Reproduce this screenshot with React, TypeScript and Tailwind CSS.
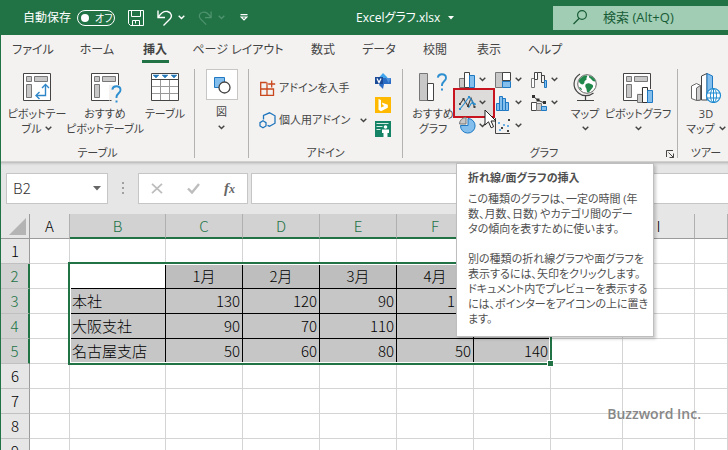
import type { ReactNode } from "react";

const tabs = [
  { label: "ファイル", width: "w-16" },
  { label: "ホーム", width: "w-16" },
  { label: "挿入", width: "w-[52px]", active: true },
  { label: "ページ レイアウト", width: "w-[114px]" },
  { label: "数式", width: "w-14" },
  { label: "データ", width: "w-14" },
  { label: "校閲", width: "w-14" },
  { label: "表示", width: "w-[52px]" },
  { label: "ヘルプ", width: "w-[60px]" },
];

const columns = ["A", "B", "C", "D", "E", "F", "G", "H", "I", ""];

const rows = [
  ["", "", "", "", "", "", "", "", "", ""],
  ["", "", "1月", "2月", "3月", "4月", "", "", "", ""],
  ["", "本社", "130", "120", "90", "110", "", "", "", ""],
  ["", "大阪支社", "90", "70", "110", "", "", "", "", ""],
  ["", "名古屋支店", "50", "60", "80", "50", "140", "", "", ""],
  ["", "", "", "", "", "", "", "", "", ""],
  ["", "", "", "", "", "", "", "", "", ""],
  ["", "", "", "", "", "", "", "", "", ""],
  ["", "", "", "", "", "", "", "", "", ""],
];

const inCols = (c: number) => c >= 1 && c <= 6;
const inRows = (r: number) => r >= 1 && r <= 4;

function Chevron({ className = "" }: { className?: string }) {
  return (
    <svg width="7" height="5" viewBox="0 0 7 5" fill="none" stroke="currentColor" strokeWidth="1.4" className={`shrink-0 ${className}`}>
      <path d="M.7 .8 3.5 3.6 6.3 .8" />
    </svg>
  );
}

function Group({ label, className, children }: { label: string; className: string; children: ReactNode }) {
  return (
    <section aria-label={label || "図"} className={`relative flex shrink-0 flex-col ${className}`}>
      <div className="flex h-20 items-start">{children}</div>
      <p className="text-center leading-[14px]">{label}</p>
    </section>
  );
}

function Divider() {
  return <div className="mt-[3px] h-[89px] w-px shrink-0 bg-[#b5b3b1]" />;
}

function BigButton({ icon, className, children }: { icon: ReactNode; className: string; children: ReactNode }) {
  return (
    <button type="button" className={`flex shrink-0 flex-col items-center whitespace-nowrap pt-[7px] leading-[15px] ${className}`}>
      <span className="mb-1 flex h-[29px] items-start justify-center">{icon}</span>
      {children}
    </button>
  );
}

function PivotBase() {
  return (
    <>
      <path d="M.5 .5h27v27H.5z" fill="#fff" stroke="#444" />
      <path d="M3.5 3.5h5v5h-5zM11.5 3.5h13v5h-13zM3.5 11.5h5v13h-5z" fill="#c8c8c8" stroke="#777" />
    </>
  );
}

function PivotIcon() {
  return (
    <svg width="28" height="28" viewBox="0 0 28 28" fill="none">
      <PivotBase />
      <path d="M22.5 12v10.500h-9" stroke="#2e86c9" strokeWidth="1.4" />
      <path d="m19 15 3.500-3.500L26 15M16.500 19 13 22.500l3.500 3.500" stroke="#2e86c9" strokeWidth="1.4" />
    </svg>
  );
}

function Question() {
  return (
    <>
      <path d="M.8 4.200C1.200 1.800 2.800.8 4.800.8c2.400 0 4.200 1.400 4.200 3.700C9 7.500 5 8 5 11.500V12.500" stroke="#2e8fd0" strokeWidth="1.900" />
      <path d="M4 15h2v2H4z" fill="#2e8fd0" />
    </>
  );
}

function RecommendedPivotIcon() {
  return (
    <svg width="31" height="30" viewBox="0 0 31 30" fill="none" className="ml-[3px]">
      <PivotBase />
      <path d="M18 12h11v17H18z" fill="#f3f2f1" />
      <path d="M18.500 27.500h2" stroke="#444" />
      <g transform="translate(20.500 12.500)">
        <Question />
      </g>
    </svg>
  );
}

function TableIcon() {
  return (
    <svg width="28" height="28" viewBox="0 0 28 28" fill="none">
      <path d="M.5 .5h27v27H.5z" fill="#fff" />
      <path d="M9.500 6v21M18.500 6v21M1 13.500h26M1 20.500h26" stroke="#999" />
      <path d="M1 6.500h26M.5 .5h27v27H.5z" stroke="#444" />
      <path d="M2 2h6L5 5zM11 2h6l-3 3zM20 2h6l-3 3z" fill="#2478b8" stroke="#2478b8" strokeWidth=".5" />
    </svg>
  );
}

function ShapesIcon() {
  return (
    <svg width="18" height="18" viewBox="0 0 18 18" fill="none">
      <path d="M1.500 1.500h10v10h-10z" fill="#83beec" stroke="#1e79c2" />
      <circle cx="11.500" cy="11.500" r="5.500" fill="#fff" stroke="#444" strokeWidth="1.300" />
    </svg>
  );
}

function GetAddinsIcon() {
  return (
    <svg width="17" height="17" viewBox="0 0 17 17" fill="none" stroke="#c9471c" strokeWidth="1.300">
      <path d="M7.500 2.500H1.700V15.300h12.800V9H1.700M8 2.500v12.800M12.700 .5v7M9.200 4h7" />
    </svg>
  );
}

function MyAddinsIcon() {
  return (
    <svg width="17" height="17" viewBox="0 0 17 17" fill="none" stroke="#1f75bd" strokeWidth="1.300">
      <path d="M4.500 7.500v-4L10.500 .8 16 3.800v7.400l-5.500 3-2-.8" />
      <path d="m4 8.800 3 1.800v3.400L4 15.800 1 14v-3.400z" />
    </svg>
  );
}

function VisioIcon() {
  return (
    <svg width="16" height="16" viewBox="0 0 16 16">
      <path d="M8 0l4.500 4.500L8 9 4 4.500z" fill="#41a5ee" />
      <path d="M7 5h9v6H9l-1 5-4-4z" fill="#2b6cc4" />
      <path d="M11 5h5l-2.500 5z" fill="#4e93dc" />
      <path d="M0 4h8v7H0z" fill="#1b4b97" />
      <path d="m2 5.500 2 4 2-4" fill="none" stroke="#fff" strokeWidth="1.300" />
    </svg>
  );
}

function BingIcon() {
  return (
    <svg width="16" height="16" viewBox="0 0 16 16">
      <path d="M0 0h16v16H0z" fill="#ffb900" />
      <path d="m3.500 2 2.500 1v7.500L9.500 9 7.700 8 6.800 5.500l6 2.200v3L6 14.200l-2.500-1.500z" fill="#fff" />
    </svg>
  );
}

function PeopleGraphIcon() {
  return (
    <svg width="16" height="16" viewBox="0 0 16 16">
      <path d="M0 0h16v16H0z" fill="#158466" />
      <path d="M1.500 2.500h12M1.500 5.500h6M1.500 8.500h4" stroke="#d4ebe3" />
      <circle cx="10.500" cy="6" r="1.800" fill="#fff" />
      <path d="M7 8.500h7V12h-1.500v4h-4v-4H7z" fill="#fff" />
    </svg>
  );
}

function RecommendedChartIcon() {
  return (
    <svg width="29" height="28" viewBox="0 0 29 28" fill="none">
      <path d="M.5 .5h8v27h-8z" fill="#c8c8c8" stroke="#777" />
      <path d="M8.500 10.500h6v17h-6z" fill="#fff" stroke="#444" />
      <g transform="translate(18 .5)">
        <Question />
      </g>
    </svg>
  );
}

function ColumnIcon() {
  return (
    <svg width="16" height="16" viewBox="0 0 16 16">
      <path d="M.5 6.500h5v9h-5z" fill="#c8c8c8" stroke="#777" />
      <path d="M5.500 .5h5v15h-5z" fill="#fff" stroke="#444" />
      <path d="M10.500 3.500h5v12h-5z" fill="#83beec" stroke="#1e79c2" />
    </svg>
  );
}

function TreemapIcon() {
  return (
    <svg width="16" height="16" viewBox="0 0 16 16">
      <path d="M.5 .5h7v15h-7z" fill="#c8c8c8" stroke="#777" />
      <path d="M7.500 .5h8v8h-8z" fill="#fff" stroke="#444" />
      <path d="M7.500 9.500h8v6h-8z" fill="#83beec" stroke="#1e79c2" />
    </svg>
  );
}

function WaterfallIcon() {
  return (
    <svg width="17" height="16" viewBox="0 0 17 16" fill="#fff">
      <path d="M.5 15.500v-9h3v9z" stroke="#777" />
      <path d="M3.500 7.500v-7h3v7z" stroke="#444" />
      <path d="M6.500 .5h4v10h3v-7h-3" fill="none" stroke="#444" />
      <path d="M13.500 8.500h2v7h-2z" fill="#83beec" stroke="#1e79c2" />
    </svg>
  );
}

function LineIcon() {
  return (
    <svg width="17" height="16" viewBox="0 0 17 16" fill="none">
      <path d="M1 9 4.500 4l4.500 7 3-8 3.500 9" stroke="#444" strokeWidth="1.100" />
      <path d="M1 14 5 9l5-7 5.500 7-3-1-3 5" stroke="#2e8fd0" strokeWidth="1.200" />
      <path d="M3.500 3h2v2h-2zM8 10h2v2H8zM0 8h2v2H0zM14.500 11h2v2h-2z" fill="#444" />
      <path d="M9 1h2v2H9zM14.500 8h2v2h-2zM0 13h2v2H0z" fill="#2e8fd0" />
    </svg>
  );
}

function HistogramIcon() {
  return (
    <svg width="16" height="16" viewBox="0 0 16 16">
      <path d="M1.500 8.500h3v7h-3zM4.500 1.500h3v14h-3zM7.500 3.500h3v12h-3zM10.500 7.500h3v8h-3z" fill="#83beec" stroke="#1e79c2" />
    </svg>
  );
}

function ComboIcon() {
  return (
    <svg width="16" height="16" viewBox="0 0 16 16">
      <path d="M.5 7.500h5v8h-5z" fill="#fff" stroke="#444" />
      <path d="M5.500 8.500h5v7h-5z" fill="#c8c8c8" stroke="#777" />
      <path d="M10.500 11.500h5v4h-5z" fill="#83beec" stroke="#1e79c2" />
      <path d="m2.500 1.500 4 3.500 7 3" fill="none" stroke="#333" />
      <path d="M1 0h3v3H1zM5.500 3.500h3v3h-3zM12 6h3v3h-3z" fill="#333" />
    </svg>
  );
}

function PieIcon() {
  return (
    <svg width="17" height="17" viewBox="0 0 17 17">
      <path d="M9 1.500v7H1.500A7.300 7.300 0 1 0 9 1.500z" fill="#83beec" stroke="#1e79c2" />
      <path d="M7 .5A6.500 6.500 0 0 0 .5 7H7z" fill="#c8c8c8" stroke="#777" />
    </svg>
  );
}

function ScatterIcon() {
  return (
    <svg width="16" height="16" viewBox="0 0 16 16">
      <path d="M.5 0v15.500H15" fill="none" stroke="#444" />
      <path d="M6 9h2v2H6zM13 1h2v2h-2zM12 12h2v2h-2z" fill="#444" />
      <path d="M3 4h2v2H3zM8 6h2v2H8zM4 11h2v2H4zM12 7h2v2h-2z" fill="#6ab0e6" />
    </svg>
  );
}

function GlobeIcon() {
  return (
    <svg width="25" height="29" viewBox="0 0 25 29" fill="none">
      <circle cx="14" cy="11" r="9.300" fill="#fff" stroke="#666" />
      <path d="M6 7c2-3 5-5 8-4.500 1 1-1 2-.5 3.500s-2 1-2 3-2 3-3.500 2S5.500 8.500 6 7zM16 3c3 0 5.500 2 6.500 5-1.500 1-3 0-4-1.500S15.500 5 16 3zM13 11c2-1.500 4-.5 6 .5s1 3-.5 4.500-2 3.500-3.500 3.500-1-3-2-4.500-1-3 0-4zM6 14c1.500 0 3 1.500 3 3-1.500 0-2.500-1.500-3-3z" fill="#21884c" />
      <path d="M7 1C-.5 5.500-.8 15 5.500 20c4 3.500 10.500 3.600 15 0M12.500 23v4M4 27.500h17" stroke="#444" strokeWidth="1.200" />
    </svg>
  );
}

function PivotChartIcon() {
  return (
    <svg width="31" height="30" viewBox="0 0 31 30" fill="none">
      <PivotBase />
      <path d="M14 20h4v-6h6v2h7v14H14z" fill="#f3f2f1" />
      <path d="M14.500 21.500h5v8h-5z" fill="#c8c8c8" stroke="#777" />
      <path d="M19.500 14.500h5v15h-5z" fill="#fff" stroke="#333" />
      <path d="M24.500 17.500h5v12h-5z" fill="#83beec" stroke="#1e79c2" />
    </svg>
  );
}

function MapTourIcon() {
  return (
    <svg width="31" height="30" viewBox="0 0 31 30" fill="none">
      <path d="m.5 13 5-2.500 4 2v14.500l-4 .5-5-2z" fill="#fff" stroke="#666" />
      <path d="m5.500 15 4-2.500V27l-4 .500z" fill="#d0d0d0" stroke="#666" />
      <path d="m10.500 3 5.500-2.500V27h-5.500z" fill="#fff" stroke="#444" />
      <path d="M16 .5 21.500 3v24H16z" fill="#83beec" stroke="#1e79c2" />
      <circle cx="22.500" cy="22.500" r="7" fill="#fff" stroke="#1e8ad0" strokeWidth="1.200" />
      <ellipse cx="22.500" cy="22.500" rx="3" ry="7" stroke="#1e8ad0" />
      <path d="M16 20h13M16 25h13M22.500 15.500v14" stroke="#1e8ad0" />
    </svg>
  );
}

function Cursor() {
  return (
    <svg width="13" height="20" viewBox="0 0 13 20" className="absolute left-[29px] top-[18px] z-10">
      <path d="M1 1v15l3.500-3.200 2.600 6 2.500-1.100L7 12h5z" fill="#fff" stroke="#222" />
    </svg>
  );
}

const chartButtons = [
  { name: "縦棒", icon: <ColumnIcon /> },
  { name: "階層構造", icon: <TreemapIcon /> },
  { name: "ウォーターフォール", icon: <WaterfallIcon /> },
  { name: "折れ線", icon: <LineIcon />, hovered: true },
  { name: "統計", icon: <HistogramIcon /> },
  { name: "組み合わせ", icon: <ComboIcon /> },
  { name: "円", icon: <PieIcon /> },
  { name: "散布図", icon: <ScatterIcon /> },
];

function ChartTooltip() {
  return (
    <div role="tooltip" className="absolute left-px top-[72px] z-20 w-[198px] border border-[#bebebe] bg-white pt-[6px] pr-1 pb-[10px] pl-[11px] text-left leading-[15px] text-[#505050] shadow-[2px_2px_3px_rgba(0,0,0,0.2)]">
      <p className="mb-[6px] font-bold">折れ線/面グラフの挿入</p>
      <p className="mb-[15px] whitespace-nowrap">
        この種類のグラフは、一定の時間 (年
        <br />
        数、月数、日数) やカテゴリ間のデー
        <br />
        タの傾向を表すために使います。
      </p>
      <p className="whitespace-nowrap">
        別の種類の折れ線グラフや面グラフを
        <br />
        表示するには、矢印をクリックします。
        <br />
        ドキュメント内でプレビューを表示する
        <br />
        には、ポインターをアイコンの上に置き
        <br />
        ます。
      </p>
    </div>
  );
}

function TitleBar() {
  return (
    <header className="flex h-[35px] shrink-0 items-center bg-[#217346] text-white">
      <div className="flex w-[352px] shrink-0 items-center pl-[22px]">
        <label htmlFor="autosave" className="w-[54px] whitespace-nowrap">
          自動保存
        </label>
        <span className="relative flex h-4 w-[38px] items-center">
          <input id="autosave" type="checkbox" className="absolute inset-0 appearance-none rounded-full border border-white" />
          <span className="pointer-events-none ml-1 size-2 rounded-full bg-white" />
          <span className="pointer-events-none ml-[6px] text-[10px] leading-4">オフ</span>
        </span>
        <button type="button" aria-label="上書き保存" className="ml-[13px]">
          <svg width="16" height="16" viewBox="0 0 16 16" fill="none" stroke="currentColor">
            <path d="M.5 .5h15v15h-13l-2-2zM3.500 .5v6h9v-6M4.500 15.500v-5h7v5M7.500 11v2.500" />
          </svg>
        </button>
        <button type="button" aria-label="元に戻す" className="ml-[13px] flex items-center gap-1">
          <svg width="17" height="16" viewBox="0 0 17 16" fill="none" stroke="currentColor" strokeWidth="1.400">
            <path d="M1 .5v7h7M1.500 7C4 3 7 .8 10.500 1.500c4 .8 5 5 2.500 7.500l-6.500 6.500" />
          </svg>
          <Chevron />
        </button>
        <button type="button" aria-label="やり直し" className="ml-3 flex items-center gap-[6px] text-[#4f936e]">
          <svg width="15" height="16" viewBox="0 0 17 16" fill="none" stroke="currentColor" strokeWidth="1.400">
            <path d="M16 .5v7H9M15.500 7C13 3 10 .8 6.500 1.500c-4 .8-5 5-2.500 7.500l6.500 6.500" />
          </svg>
          <Chevron />
        </button>
        <button type="button" aria-label="クイック アクセス ツール バーのユーザー設定" className="ml-[15px]">
          <svg width="8" height="7" viewBox="0 0 8 7" fill="none" stroke="currentColor" strokeWidth="1.200">
            <path d="M.5 .6h7M1.200 3h5.600L4 5.800z" />
          </svg>
        </button>
      </div>
      <button type="button" className="flex w-[200px] shrink-0 items-center gap-2 pl-[3px]">
        Excelグラフ.xlsx
        <svg width="6" height="4" viewBox="0 0 6 4">
          <path d="M0 0h6L3 3.500z" fill="currentColor" />
        </svg>
      </button>
      <label className="flex h-6 min-w-0 flex-1 items-center gap-4 bg-[#a0cdb3] pl-5 text-[#185c37]">
        <svg width="14" height="15" viewBox="0 0 14 15" fill="none" stroke="currentColor" strokeWidth="1.200" className="shrink-0">
          <circle cx="9" cy="5" r="4.400" />
          <path d="M6 8.500.5 14" />
        </svg>
        <input type="search" aria-label="検索" placeholder="検索 (Alt+Q)" className="min-w-0 flex-1 bg-transparent text-[13px] outline-none placeholder:text-[#185c37] placeholder:opacity-100" />
      </label>
    </header>
  );
}

function Ribbon() {
  return (
    <div className="flex h-24 shrink-0 border-b border-[#d2d0ce] bg-[#f3f2f1] text-[11px] text-[#444]">
      <Group label="テーブル" className="w-[193px]">
        <BigButton icon={<PivotIcon />} className="w-[72px]">
          <span>ピボットテー</span>
          <span className="flex items-center gap-1">
            ブル <Chevron />
          </span>
        </BigButton>
        <BigButton icon={<RecommendedPivotIcon />} className="w-16">
          <span>おすすめ</span>
          <span>ピボットテーブル</span>
        </BigButton>
        <BigButton icon={<TableIcon />} className="w-14">
          <span>テーブル</span>
        </BigButton>
      </Group>
      <Divider />
      <Group label="" className="w-[53px]">
        <button type="button" className="mx-auto mt-[3px] flex flex-col items-center">
          <span className="flex h-[31px] w-8 items-center justify-center border border-[#c8c6c4] bg-white">
            <ShapesIcon />
          </span>
          <span className="mt-1 leading-[15px]">図</span>
          <Chevron className="mt-[6px]" />
        </button>
      </Group>
      <Divider />
      <Group label="アドイン" className="w-[153px]">
        <div className="flex w-[118px] flex-col gap-[15px] pt-[14px] pl-[10px]">
          <button type="button" className="flex h-[17px] items-center gap-[3px] whitespace-nowrap">
            <GetAddinsIcon />
            アドインを入手
          </button>
          <button type="button" className="flex h-[17px] items-center gap-[3px] whitespace-nowrap">
            <MyAddinsIcon />
            個人用アドイン
            <Chevron className="ml-auto" />
          </button>
        </div>
        <div className="ml-2 flex flex-col gap-2 pt-[7px]">
          <button type="button" aria-label="Visio Data Visualizer">
            <VisioIcon />
          </button>
          <button type="button" aria-label="Bing Maps">
            <BingIcon />
          </button>
          <button type="button" aria-label="People Graph">
            <PeopleGraphIcon />
          </button>
        </div>
      </Group>
      <Divider />
      <Group label="グラフ" className="w-[274px] pl-2">
        <BigButton icon={<RecommendedChartIcon />} className="w-11">
          <span>おすすめ</span>
          <span>グラフ</span>
        </BigButton>
        <div className="grid w-[108px] shrink-0 grid-cols-3 pt-[2px]">
          {chartButtons.map((b) => (
            <div key={b.name} className="relative h-[23px]">
              {b.hovered && <span className="absolute -top-[3px] -left-[2px] h-[30px] w-[42px] border-2 border-[#c8141e] bg-[#dedcda]" />}
              <button type="button" aria-label={b.name} className="relative flex size-full items-center pl-1">
                <span className="w-5">{b.icon}</span>
                <Chevron />
              </button>
              {b.hovered && <Cursor />}
              {b.hovered && <ChartTooltip />}
            </div>
          ))}
        </div>
        <BigButton icon={<GlobeIcon />} className="w-11">
          <span>マップ</span>
          <Chevron className="mt-[5px]" />
        </BigButton>
        <BigButton icon={<PivotChartIcon />} className="w-[62px]">
          <span>ピボットグラフ</span>
          <Chevron className="mt-[5px]" />
        </BigButton>
        <button type="button" aria-label="グラフの設定" className="absolute right-[3px] bottom-[3px]">
          <svg width="8" height="8" viewBox="0 0 8 8" fill="none" stroke="#444">
            <path d="M.5 7V.5H7M2.500 2.500l5 5M7.500 3.500v4h-4" />
          </svg>
        </button>
      </Group>
      <Divider />
      <Group label="ツアー" className="w-[56px]">
        <BigButton icon={<MapTourIcon />} className="w-full">
          <span>3D</span>
          <span className="flex items-center gap-1">
            マップ <Chevron />
          </span>
        </BigButton>
      </Group>
    </div>
  );
}

function FormulaBar() {
  return (
    <div className="flex h-[52px] shrink-0 items-center bg-[#e6e6e6] pl-[5px] shadow-[inset_0_3px_3px_-2px_rgba(0,0,0,0.25)]">
      <div className="flex h-[31px] w-[102px] shrink-0 items-center border border-[#c6c6c6] bg-white pr-[6px] pl-[6px]">
        <input aria-label="名前ボックス" defaultValue="B2" className="min-w-0 flex-1 bg-transparent font-['Noto_Sans_CJK_JP',sans-serif] text-[15px] font-light text-[#333] outline-none" />
        <button type="button" aria-label="名前の一覧">
          <svg width="8" height="5" viewBox="0 0 8 5">
            <path d="M0 0h8L4 4.500z" fill="#666" />
          </svg>
        </button>
      </div>
      <div className="flex w-[30px] shrink-0 flex-col items-center gap-[3px]">
        <span className="size-[2px] bg-[#a0a0a0]" />
        <span className="size-[2px] bg-[#a0a0a0]" />
        <span className="size-[2px] bg-[#a0a0a0]" />
      </div>
      <div className="flex h-[31px] w-[110px] shrink-0 items-center justify-between border border-[#c6c6c6] bg-white px-3">
        <button type="button" aria-label="キャンセル">
          <svg width="12" height="11" viewBox="0 0 12 11" fill="none" stroke="#bdbdbd" strokeWidth="1.800">
            <path d="m1 .8 10 9.400M11 .8 1 10.200" />
          </svg>
        </button>
        <button type="button" aria-label="入力">
          <svg width="13" height="11" viewBox="0 0 13 11" fill="none" stroke="#bdbdbd" strokeWidth="2.400">
            <path d="m1 5.500 4 4L12 1" />
          </svg>
        </button>
        <button type="button" aria-label="関数の挿入" className="font-['Liberation_Serif',serif] text-[15px] leading-4 font-bold text-[#666] italic">
          f<span className="text-[12px]">x</span>
        </button>
      </div>
      <input aria-label="数式バー" className="ml-[3px] h-[31px] min-w-0 flex-1 border border-r-0 border-[#c6c6c6] bg-white px-2 outline-none" />
    </div>
  );
}

function cellClass(r: number, c: number) {
  if (!inRows(r) || !inCols(c)) return "border-[#d4d4d4] bg-white";
  if (r === 1 && c === 1) return "border-black bg-white";
  if (r === 1) return "border-black bg-[#bebebe] text-center";
  return c === 1 ? "border-black bg-[#c6c6c6] pl-[2px]" : "border-black bg-[#c6c6c6] pr-[2px] text-right";
}

function Sheet() {
  return (
    <main className="relative min-h-0 flex-1 overflow-hidden bg-white font-['Noto_Sans_CJK_JP',sans-serif] text-[15px] leading-5 font-light text-black">
      <table className="w-full table-fixed border-separate border-spacing-0">
        <colgroup>
          <col className="w-[29px]" />
          <col className="w-10" />
          <col className="w-24" />
          <col className="w-[77px]" />
          <col className="w-[77px]" />
          <col className="w-[77px]" />
          <col className="w-[77px]" />
          <col className="w-[77px]" />
          <col className="w-[72px]" />
          <col className="w-[72px]" />
          <col />
        </colgroup>
        <thead>
          <tr>
            <th aria-label="すべて選択" className="h-[25px] border-r border-b border-[#9b9b9b] bg-[#e6e6e6] p-0">
              <svg width="17" height="17" viewBox="0 0 17 17" className="ml-2">
                <path d="M17 0v17H0z" fill="#b4b4b4" />
              </svg>
            </th>
            {columns.map((name, c) => (
              <th
                key={c}
                scope="col"
                className={`h-[25px] border-r p-0 font-light ${
                  inCols(c) ? "border-b-2 border-r-[#b0b0b0] border-b-[#217346] bg-[#d2d2d2] text-[#217346]" : "border-b border-r-[#b0b0b0] border-b-[#9b9b9b] bg-[#e6e6e6]"
                }`}
              >
                {name}
              </th>
            ))}
          </tr>
        </thead>
        <tbody>
          {rows.map((row, r) => (
            <tr key={r}>
              <th
                scope="row"
                className={`h-[25px] border-b border-b-[#c0c0c0] p-0 font-light ${
                  inRows(r) ? "border-r-2 border-r-[#217346] bg-[#d2d2d2] text-[#217346]" : "border-r border-r-[#9b9b9b] bg-[#e6e6e6]"
                }`}
              >
                {r + 1}
              </th>
              {row.map((value, c) => (
                <td key={c} className={`h-[25px] border-r border-b p-0 whitespace-nowrap ${cellClass(r, c)}`}>
                  {value}
                </td>
              ))}
            </tr>
          ))}
        </tbody>
      </table>
      <div className="pointer-events-none absolute top-12 left-[67px] h-[103px] w-[484px] border-2 border-[#217346]">
        <div className="size-full border border-white" />
        <span className="absolute -right-[4px] -bottom-[4px] size-[7px] border border-white bg-[#217346]" />
      </div>
      <p className="absolute right-[27px] bottom-[26px] font-['Open_Sans',sans-serif] text-[14px] font-semibold text-[#878787]">Buzzword Inc.</p>
    </main>
  );
}

export default function App() {
  return (
    <div className="flex h-screen flex-col overflow-hidden border-l border-[#217346] font-['Open_Sans','Noto_Sans_CJK_JP',sans-serif] text-[12px] [font-feature-settings:'palt']">
      <TitleBar />
      <nav className="flex h-[31px] shrink-0 bg-[#f3f2f1] text-[#444]">
        {tabs.map((tab) => (
          <button key={tab.label} type="button" className={`flex shrink-0 flex-col items-center whitespace-nowrap pt-[5px] leading-5 ${tab.width} ${tab.active ? "font-bold" : ""}`}>
            {tab.label}
            {tab.active && <span className="h-[3px] w-[27px] bg-[#217346]" />}
          </button>
        ))}
      </nav>
      <Ribbon />
      <FormulaBar />
      <Sheet />
    </div>
  );
}
